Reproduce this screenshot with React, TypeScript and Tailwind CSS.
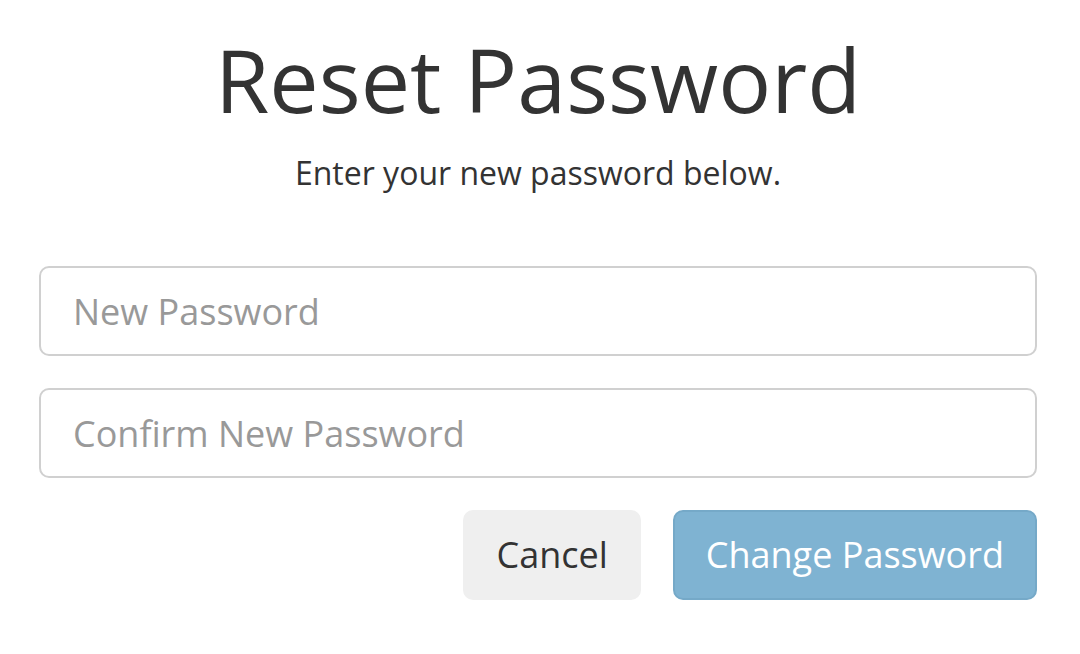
import React from "react";

export default function App() {
  return (
    <div
      className="min-h-[654px] bg-white pl-[39px] pt-[35px]"
      style={{ fontFamily: '"Open Sans", sans-serif' }}
    >
      <div className="w-[998px]">
        <h1 className="text-center text-[88px] leading-none font-normal text-[#333333]">
          Reset Password
        </h1>
        <p className="mt-[34px] text-center text-[32px] leading-none text-[#333333]">
          Enter your new password below.
        </p>

        <form className="mt-[77px] flex flex-col gap-[32px]">
          <input
            type="password"
            placeholder="New Password"
            className="h-[90px] w-full rounded-[10px] border-2 border-[#d0d0d0] px-[32px] text-[36px] text-[#333333] outline-none placeholder:text-[#999999]"
          />
          <input
            type="password"
            placeholder="Confirm New Password"
            className="h-[90px] w-full rounded-[10px] border-2 border-[#d0d0d0] px-[32px] text-[36px] text-[#333333] outline-none placeholder:text-[#999999]"
          />
          <div className="flex justify-end gap-[32px]">
            <button
              type="button"
              className="h-[90px] rounded-[10px] bg-[#efefef] px-[33px] text-[36px] text-[#333333]"
            >
              Cancel
            </button>
            <button
              type="submit"
              className="h-[90px] rounded-[10px] border-2 border-[#75a9c8] bg-[#7fb3d2] px-[31px] text-[36px] text-white"
            >
              Change Password
            </button>
          </div>
        </form>
      </div>
    </div>
  );
}
